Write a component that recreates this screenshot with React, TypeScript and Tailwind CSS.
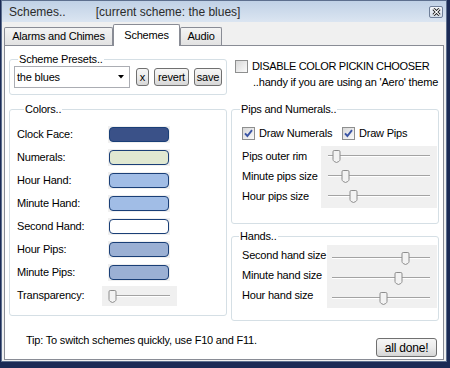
import React from "react";

const Btn = ({ label, className }: { label: string; className: string }) => (
  <button
    className={
      "flex items-center justify-center rounded-[3px] border border-[#707070] bg-linear-to-b from-[#f6f6f6] via-[#ebebeb] to-[#d6d6d6] text-[11px] leading-none text-black " +
      className
    }
  >
    {label}
  </button>
);

const Check = ({ checked }: { checked?: boolean }) => (
  <span className="flex h-[13px] w-[13px] shrink-0 items-center justify-center border border-[#8e8f8f] bg-linear-to-br from-[#d8d8d8] to-[#fbfbfb]">
    {checked && (
      <svg width="9" height="9" viewBox="0 0 9 9">
        <path d="M1 4.3 L3.4 7 L8 1.2" stroke="#3b55a5" strokeWidth="1.9" fill="none" />
      </svg>
    )}
  </span>
);

const Thumb = ({ pos }: { pos: string }) => (
  <svg className={"absolute top-[4px] " + pos} width="9" height="13" viewBox="0 0 9 13">
    <path
      d="M1 1.8 Q1 .5 2.2 .5 H6.8 Q8 .5 8 1.8 V9.5 Q8 10.5 6.8 11.5 L4.5 12.5 L2.2 11.5 Q1 10.5 1 9.5 Z"
      fill="#f3f3f3"
      stroke="#8c8c8c"
    />
  </svg>
);

// one trackbar: gray control background, etched track, thumb
const Slider = ({ thumb, track }: { thumb: string; track: string }) => (
  <div className="relative h-[20px] w-full">
    <div className={"absolute top-[9px] h-[2px] border-t border-b border-t-[#a3a3a3] border-b-white " + track} />
    <Thumb pos={thumb} />
  </div>
);

const Swatch = ({ color }: { color: string }) => (
  <span className="flex bg-[#f0f0f0] p-[1px]">
    <span className={"h-[15px] w-[60px] rounded-[4px] border border-[#1a3f77] " + color} />
  </span>
);

const colorRows = [
  { label: "Clock Face:", color: "bg-[#3a5188]" },
  { label: "Numerals:", color: "bg-[#e0e8d1]" },
  { label: "Hour Hand:", color: "bg-[#a1bde6]" },
  { label: "Minute Hand:", color: "bg-[#a1bde6]" },
  { label: "Second Hand:", color: "bg-white" },
  { label: "Hour Pips:", color: "bg-[#9bb0d4]" },
  { label: "Minute Pips:", color: "bg-[#9bb0d4]" },
];

export default function App() {
  return (
    <div className="h-[368px] w-[450px] overflow-hidden bg-[#1b2a55] font-['Liberation_Sans',Arial,sans-serif] text-[11px] tracking-[-0.2px] text-black">
      <div className="ml-[1px] flex h-[362px] w-[446px] flex-col border border-[#5d6f8e] bg-[#f0f0f0]">
        {/* title bar */}
        <div className="flex h-[21px] shrink-0 items-center bg-linear-to-b from-[#c0d1e6] to-[#dbe5f1] pl-[7px] pr-[3px] text-[12px] tracking-normal text-[#2b2b2b]">
          <span>Schemes..</span>
          <span className="ml-[30px]">[current scheme: the blues]</span>
          <span className="ml-auto flex h-[12px] w-[14px] items-center justify-center rounded-[2px] border border-[#6f7f99] bg-linear-to-b from-[#f4f7fb] to-[#d4dde9]">
            <svg width="9" height="8" viewBox="0 0 9 8">
              <path d="M1.5 1 L7.5 7 M7.5 1 L1.5 7" stroke="#111" strokeWidth="3" />
              <path d="M1.5 1 L7.5 7 M7.5 1 L1.5 7" stroke="#fff" strokeWidth="1.1" />
            </svg>
          </span>
        </div>

        {/* tabs */}
        <div className="relative z-10 mt-[2px] flex h-[21px] items-end px-[2px]">
          <div className="flex h-[18px] w-[109px] items-center justify-center rounded-t-[2px] border border-b-0 border-[#898c95] bg-linear-to-b from-[#f4f4f4] to-[#e2e2e2]">
            Alarms and Chimes
          </div>
          <div className="-mb-px flex h-[22px] w-[67px] items-start justify-center rounded-t-[2px] border border-b-0 border-[#898c95] bg-white pt-[2px]">
            Schemes
          </div>
          <div className="flex h-[18px] w-[42px] items-center justify-center rounded-t-[2px] border border-b-0 border-[#898c95] bg-linear-to-b from-[#f4f4f4] to-[#e2e2e2]">
            Audio
          </div>
        </div>

        {/* tab page */}
        <div className="mx-[2px] flex h-[315px] flex-col border border-[#898c95] bg-white px-[4px]">
          <div className="flex gap-[4px]">
            {/* left column */}
            <div className="flex w-[218px] flex-col">
              <fieldset className="mt-[7px] rounded-[3px] border border-[#d5dfe5] pb-[6px] pl-[4px]">
                <legend className="ml-[4px] px-[1px] leading-[13px]">Scheme Presets..</legend>
                <div className="flex items-center">
                  <div className="flex h-[22px] w-[116px] items-center border border-[#abadb3] bg-white pl-[2px] pr-[5px]">
                    <span>the blues</span>
                    <svg className="ml-auto" width="6" height="4" viewBox="0 0 6 4">
                      <path d="M0 0 H6 L3 3.5 Z" fill="#000" />
                    </svg>
                  </div>
                  <Btn label="x" className="ml-[6px] h-[18px] w-[13px]" />
                  <Btn label="revert" className="ml-[5px] h-[18px] w-[35px]" />
                  <Btn label="save" className="ml-[5px] h-[18px] w-[28px]" />
                </div>
              </fieldset>

              <fieldset className="mt-[8px] rounded-[3px] border border-[#d5dfe5] pb-[8px] pl-[7px] pt-[7px]">
                <legend className="ml-[7px] px-[1px] leading-[13px]">Colors..</legend>
                {colorRows.map((r) => (
                  <div key={r.label} className="flex h-[23px] items-center">
                    <span className="w-[91px]">{r.label}</span>
                    <Swatch color={r.color} />
                  </div>
                ))}
                <div className="flex h-[23px] items-center">
                  <span className="w-[85px]">Transparency:</span>
                  <div className="w-[75px] bg-[#f0f0f0]">
                    <Slider thumb="left-[6px]" track="left-[7px] right-[7px]" />
                  </div>
                </div>
              </fieldset>
            </div>

            {/* right column */}
            <div className="flex w-[208px] flex-col">
              <div className="mt-[13px] flex h-[14px] items-center whitespace-nowrap pl-[4px]">
                <Check />
                <span className="ml-[4px] tracking-[-0.35px]">DISABLE COLOR PICKIN CHOOSER</span>
              </div>
              <div className="mt-[2px] h-[14px] whitespace-nowrap pl-[22px] leading-[14px]">..handy if you are using an 'Aero' theme</div>

              <fieldset className="mt-[14px] rounded-[3px] border border-[#d5dfe5] pb-[15px] pl-[10px] pt-[10px]">
                <legend className="ml-[-2px] px-[1px] leading-[13px]">Pips and Numerals..</legend>
                <div className="flex h-[14px] items-center">
                  <div className="flex w-[100px] items-center">
                    <Check checked />
                    <span className="ml-[4px]">Draw Numerals</span>
                  </div>
                  <Check checked />
                  <span className="ml-[4px]">Draw Pips</span>
                </div>
                <div className="mt-[6px] flex">
                  <div className="flex w-[79px] flex-col">
                    <span className="flex h-[20px] items-center">Pips outer rim</span>
                    <span className="flex h-[20px] items-center">Minute pips size</span>
                    <span className="flex h-[20px] items-center">Hour pips size</span>
                  </div>
                  <div className="flex w-[116px] flex-col bg-[#f0f0f0] pb-[2px]">
                    <Slider thumb="left-[11px]" track="left-[7px] right-[7px]" />
                    <Slider thumb="left-[20px]" track="left-[7px] right-[7px]" />
                    <Slider thumb="left-[28px]" track="left-[7px] right-[7px]" />
                  </div>
                </div>
              </fieldset>

              <fieldset className="mt-[6px] rounded-[3px] border border-[#d5dfe5] pb-[12px] pl-[10px] pt-[2px]">
                <legend className="ml-[-3px] px-[1px] leading-[13px]">Hands..</legend>
                <div className="flex">
                  <div className="flex w-[85px] flex-col">
                    <span className="flex h-[20px] items-center">Second hand size</span>
                    <span className="flex h-[20px] items-center">Minute hand size</span>
                    <span className="flex h-[20px] items-center">Hour hand size</span>
                  </div>
                  <div className="flex w-[110px] flex-col bg-[#f0f0f0] pt-[3px]">
                    <Slider thumb="left-[74px]" track="left-[5px] right-[7px]" />
                    <Slider thumb="left-[67px]" track="left-[5px] right-[7px]" />
                    <Slider thumb="left-[52px]" track="left-[5px] right-[7px]" />
                  </div>
                </div>
              </fieldset>
            </div>
          </div>

          <div className="mt-auto flex items-start pb-[2px] pr-[2px]">
            <span className="mt-[-4px] pl-[17px] leading-[13px]">Tip: To switch schemes quickly, use F10 and F11.</span>
            <Btn label="all done!" className="ml-auto h-[19px] w-[61px] text-[12px]" />
          </div>
        </div>
      </div>
    </div>
  );
}
